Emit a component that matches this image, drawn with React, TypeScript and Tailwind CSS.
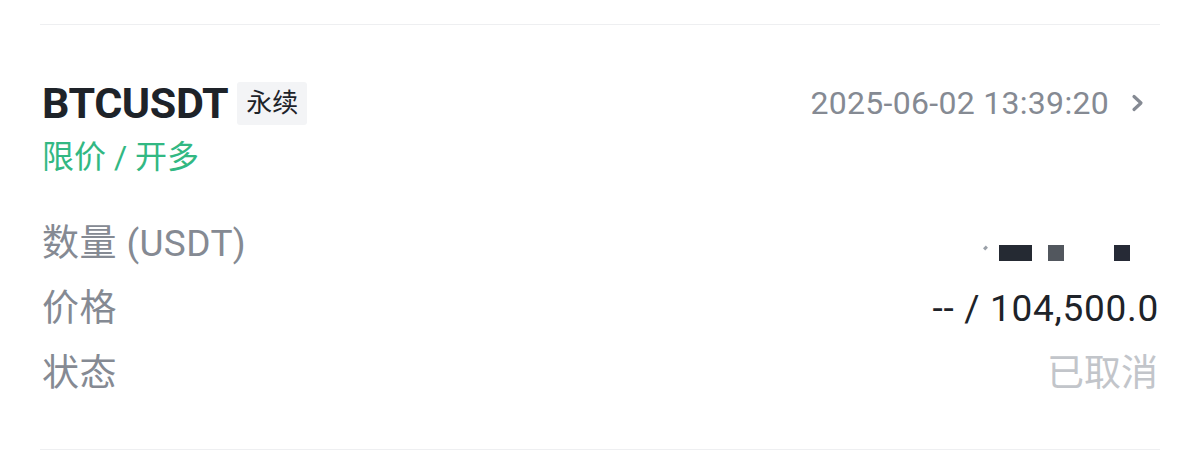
import React from 'react';

const font = { fontFamily: "Roboto, 'Noto Sans CJK SC', sans-serif" };

const rows = [
  { label: '数量 (USDT)', value: 'masked' },
  { label: '价格', value: '-- / 104,500.0' },
  { label: '状态', value: '已取消' },
];

function Masked() {
  return (
    <div className="flex items-center h-[48px] pt-[17px]">
      <span className="w-[3px] h-[4px] bg-[#9aa0a8] rotate-45 mr-[12px] mt-[-10px]" />
      <span className="w-[33px] h-[16px] bg-[#252a33]" />
      <span className="w-[16px] h-[16px] bg-[#52575e] ml-[16px]" />
      <span className="w-[16px] h-[16px] bg-[#262a36] ml-[50px] mr-[28px]" />
    </div>
  );
}

export default function App() {
  return (
    <div className="w-[1200px] h-[462px] bg-white overflow-hidden" style={font}>
      <div className="mx-[40px] mt-[24px] border-t border-b border-[#eeeff1] pl-[2px] pr-[2px] pt-[54px] pb-[51px]">
        {/* header */}
        <div className="flex items-center justify-between h-[48px]">
          <div className="flex items-center">
            <span className="text-[43px] font-bold text-[#1e2329] tracking-[-0.4px] leading-[48px]">BTCUSDT</span>
            <span className="ml-[9px] px-[9px] h-[43px] flex items-center bg-[#f3f4f6] rounded-[3px] text-[26px] text-[#1e2329]">永续</span>
          </div>
          <div className="flex items-center text-[32px] text-[#858a93] leading-[48px] tracking-[0.3px]">
            <span>2025-06-02 13:39:20</span>
            <svg className="ml-[22px] mr-[14px]" width="13" height="18" viewBox="0 0 13 18" fill="none">
              <path d="M3 2.5 L10 9 L3 15.5" stroke="#858a93" strokeWidth="3.2" strokeLinecap="round" strokeLinejoin="round" />
            </svg>
          </div>
        </div>
        <div className="mt-[6px] text-[32px] leading-[48px] text-[#32b883]">限价 / 开多</div>

        {/* detail rows */}
        <div className="mt-[39px] flex flex-col gap-[17px]">
          {rows.map((r) => (
            <div key={r.label} className="flex items-center justify-between h-[48px] text-[37px] leading-[48px]">
              <span className="text-[#858a93] tracking-[0.4px]">{r.label}</span>
              {r.value === 'masked' ? (
                <Masked />
              ) : r.value === '已取消' ? (
                <span className="text-[#c2c5ca]">{r.value}</span>
              ) : (
                <span className="text-[#1e2329] tracking-[0.7px] mr-[-1px]">{r.value}</span>
              )}
            </div>
          ))}
        </div>
      </div>
    </div>
  );
}
